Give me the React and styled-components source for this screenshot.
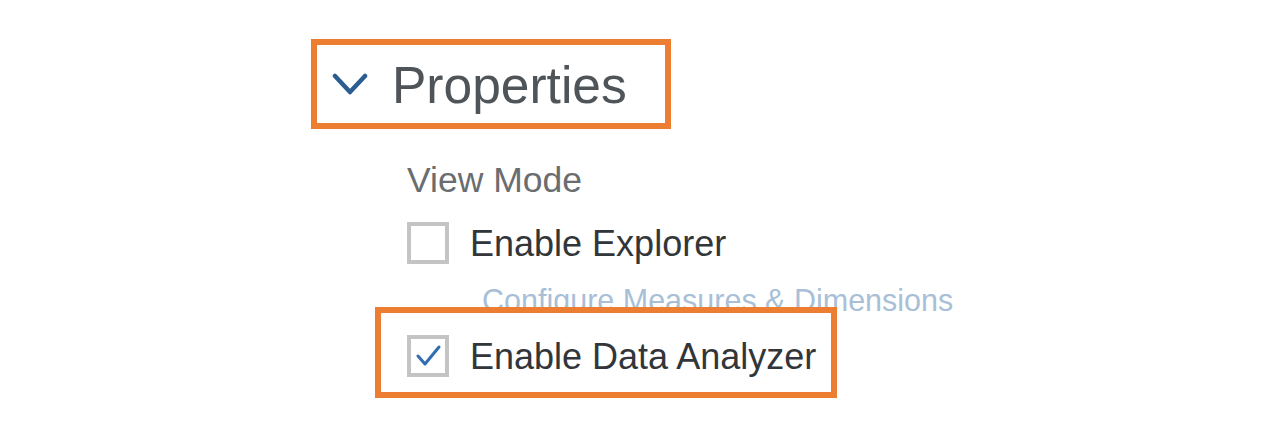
import React from "react";
import styled, { createGlobalStyle } from "styled-components";

const GlobalStyle = createGlobalStyle`
  html, body {
    margin: 0;
    padding: 0;
    background: #ffffff;
  }
  body {
    font-family: "Liberation Sans", Arial, sans-serif;
  }
`;

const Page = styled.div`
  display: flex;
  flex-direction: column;
  align-items: flex-start;
  padding: 39px 0 0 311px;
  height: 435px;
  box-sizing: border-box;
`;

const Highlight = styled.div`
  position: relative;
  display: inline-flex;
  align-items: center;
  box-sizing: border-box;
  border: 6px solid #ed7d31;
  background: #ffffff;
`;

const HeaderBox = styled(Highlight)`
  height: 90px;
  padding: 3px 38px 0 15px;
  gap: 24px;
`;

const Chevron = styled.svg`
  width: 36px;
  height: 22px;
  flex: none;
  margin-top: -4px;
`;

const Title = styled.span`
  font-size: 51.5px;
  line-height: 51px;
  color: #4f5459;
`;

const Section = styled.div`
  display: flex;
  flex-direction: column;
  align-items: flex-start;
  padding-left: 96px;
  margin-top: 33px;
`;

const GroupLabel = styled.div`
  font-size: 35.5px;
  line-height: 36px;
  color: #6a6d70;
`;

const CheckRow = styled.div`
  display: flex;
  align-items: center;
  gap: 21px;
  margin-top: ${(p) => p.$top || 0}px;
`;

const Box = styled.span`
  width: 42px;
  height: 42px;
  box-sizing: border-box;
  border: 4px solid #c4c4c4;
  background: #ffffff;
  flex: none;
  display: block;
`;

const Label = styled.span`
  font-size: 36px;
  line-height: 42px;
  padding-top: 2px;
  color: #32363a;
`;

const SubLink = styled.div`
  font-size: 30.5px;
  line-height: 30px;
  color: #a8bfd7;
  margin: 20px 0 0 75px;
`;

const AnalyzerBox = styled(Highlight)`
  margin: -8px 0 0 -32px;
  padding: 21px 15px 14px 26px;
`;

const CheckMark = styled.svg`
  width: 34px;
  height: 34px;
  display: block;
`;

function Checkbox({ checked }) {
  return (
    <Box>
      {checked && (
        <CheckMark viewBox="0 0 34 34">
          <polyline
            points="7,17 14,25 28,8"
            fill="none"
            stroke="#2f6eb0"
            strokeWidth="3"
            strokeLinecap="round"
            strokeLinejoin="round"
          />
        </CheckMark>
      )}
    </Box>
  );
}

export default function App() {
  return (
    <>
      <GlobalStyle />
      <Page>
        <HeaderBox>
          <Chevron viewBox="0 0 36 22">
            <polyline
              points="3,3 18,19 33,3"
              fill="none"
              stroke="#2b5d91"
              strokeWidth="4.5"
              strokeLinecap="round"
              strokeLinejoin="round"
            />
          </Chevron>
          <Title>Properties</Title>
        </HeaderBox>
        <Section>
          <GroupLabel>View Mode</GroupLabel>
          <CheckRow $top={23}>
            <Checkbox />
            <Label>Enable Explorer</Label>
          </CheckRow>
          <SubLink>Configure Measures &amp; Dimensions</SubLink>
          <AnalyzerBox>
            <CheckRow>
              <Checkbox checked />
              <Label>Enable Data Analyzer</Label>
            </CheckRow>
          </AnalyzerBox>
        </Section>
      </Page>
    </>
  );
}
